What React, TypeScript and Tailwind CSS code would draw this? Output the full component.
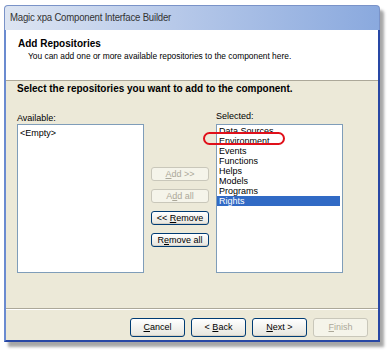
import React from 'react';

const selected = ['Data Sources', 'Environment', 'Events', 'Functions', 'Helps', 'Models', 'Programs', 'Rights'];

function XpButton({ children, disabled, w = 'w-[55px]', h = 'h-[19px]' }: { children: React.ReactNode; disabled?: boolean; w?: string; h?: string }) {
  return (
    <div
      className={`${w} ${h} flex items-center justify-center rounded-[3px] border text-[9px] leading-none ${
        disabled
          ? 'border-[#c9c7ba] bg-[#f5f4ea] text-[#aca899]'
          : 'border-[#003c74] bg-gradient-to-b from-white to-[#e6e5de] text-black shadow-[inset_0_-1px_0_#d6d0c5]'
      }`}
    >
      {children}
    </div>
  );
}

export default function App() {
  return (
    <div className="h-[352px] w-[388px] overflow-hidden bg-white pl-[4px] pt-[5px] font-['Liberation_Sans',Arial,sans-serif]">
      <div className="flex h-[337px] w-[376px] flex-col rounded-t-[4px] shadow-[4px_5px_3px_rgba(0,0,0,0.35)]">
        {/* title bar */}
        <div className="flex h-[25px] items-center rounded-t-[4px] border border-b-0 border-[#7a93c8] bg-gradient-to-r from-[#dde5f2] via-[#b3c6e8] to-[#8aa9de] pl-[5px]">
          <span className="scale-y-110 text-[9.6px] tracking-[-0.2px] text-[#333]">Magic xpa Component Interface Builder</span>
        </div>

        <div className="flex flex-1 flex-col border-x-[2px] border-b-[2px] border-l-[#6b8bd0] border-r-[#2847a4] border-b-[#2847a4]">
          {/* header */}
          <div className="h-[51px] border-b border-[#aca899] bg-white pl-[12px] pt-[7px] shadow-[0_1px_0_white]">
            <div className="text-[10px] font-bold leading-[13px] text-black">Add Repositories</div>
            <div className="pl-[10px] pt-[1px] text-[8.4px] leading-[11px] text-black">
              You can add one or more available repositories to the component here.
            </div>
          </div>

          {/* body */}
          <div className="flex flex-1 flex-col bg-[#ece9d8] pl-[11px] pt-[1px]">
            <div className="text-[10px] font-bold leading-[13px] text-black">
              Select the repositories you want to add to the component.
            </div>

            <div className="mt-[18px] flex">
              <div className="flex flex-col">
                <div className="h-[10px] text-[9px] leading-[10px] text-black">Available:</div>
                <div className="mt-[1px] h-[149px] w-[127px] border border-[#7f9db9] bg-white px-[2px] pt-[3px] text-[9px] leading-[10px]">
                  &lt;Empty&gt;
                </div>
              </div>

              <div className="ml-[7px] flex flex-col gap-[8px] pt-[54px]">
                <XpButton disabled w="w-[58px]" h="h-[14px]">
                  <span><u>A</u>dd &gt;&gt;</span>
                </XpButton>
                <XpButton disabled w="w-[58px]" h="h-[14px]">
                  <span>A<u>d</u>d all</span>
                </XpButton>
                <XpButton w="w-[58px]" h="h-[14px]">
                  <span>&lt;&lt; <u>R</u>emove</span>
                </XpButton>
                <XpButton w="w-[58px]" h="h-[14px]">
                  <span>R<u>e</u>move all</span>
                </XpButton>
              </div>

              <div className="relative ml-[7px] flex flex-col">
                <div className="h-[10px] -translate-y-[2px] text-[9px] leading-[10px] text-black">Selected:</div>
                <div className="mt-[1px] h-[149px] w-[127px] border border-[#7f9db9] bg-white pt-[1px] text-[9px] leading-[10px]">
                  {selected.map((s) => (
                    <div
                      key={s}
                      className={`pl-[2px] ${s === 'Rights' ? 'mr-[2px] bg-[#316ac5] text-white' : 'text-black'}`}
                    >
                      {s}
                    </div>
                  ))}
                </div>
                <div className="absolute left-[-13px] top-[19px] h-[13px] w-[82px] rounded-[7px] border-[2px] border-[#e0101a]" />
              </div>
            </div>
          </div>

          {/* footer */}
          <div className="flex h-[32px] items-start justify-end gap-[6px] border-t border-[#aca899] bg-[#ece9d8] pr-[10px] pt-[9px] shadow-[inset_0_1px_0_white]">
            <XpButton><span><u>C</u>ancel</span></XpButton>
            <XpButton><span>&lt; <u>B</u>ack</span></XpButton>
            <XpButton><span><u>N</u>ext &gt;</span></XpButton>
            <XpButton disabled><span><u>F</u>inish</span></XpButton>
          </div>
        </div>
      </div>
    </div>
  );
}
